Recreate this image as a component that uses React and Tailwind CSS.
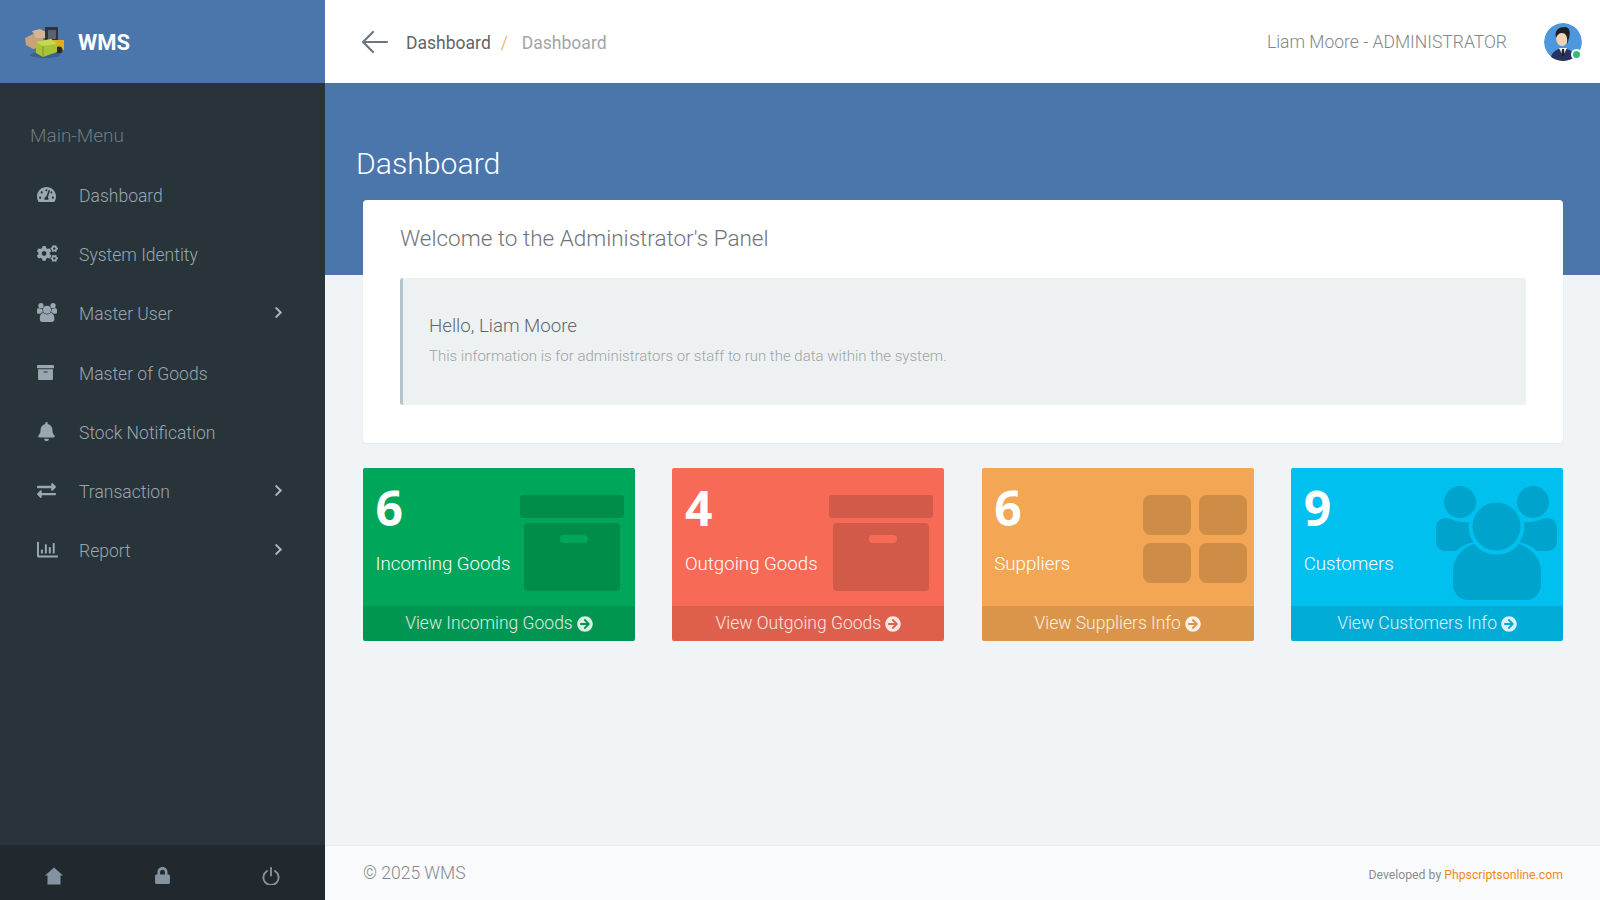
import React from 'react';
import {
  FaTachometerAlt, FaCogs, FaArchive, FaBell, FaExchangeAlt, FaRegChartBar,
  FaChevronRight, FaLock, FaArrowCircleRight,
} from 'react-icons/fa';

const Logo = () => (
  <svg width="42" height="34" viewBox="0 0 42 34">
    <ellipse cx="21" cy="30" rx="15" ry="3" fill="#2a4a6b" opacity="0.5" />
    <path d="M1 13 L9 9 L19 12 L19 22 L9 24 L2 20 Z" fill="#c8a27c" />
    <path d="M8 6 L16 4 L22 7 L22 13 L12 13 Z" fill="#d7b593" />
    <rect x="21" y="2" width="13" height="17" fill="#2f3338" />
    <rect x="24" y="5" width="8" height="9" fill="#59636b" />
    <path d="M29 15 L40 15 L40 25 L29 27 Z" fill="#e2ad1f" />
    <circle cx="35" cy="25" r="3.5" fill="#2b2b2b" />
    <path d="M12 17 L27 14 L33 19 L33 27 L19 32 L12 28 Z" fill="#a9c23a" />
    <path d="M12 17 L19 21 L33 19 L27 14 Z" fill="#c6d84f" />
    <path d="M19 21 L19 32" stroke="#7f9524" strokeWidth="1" />
  </svg>
);

const Avatar = () => (
  <svg width="38" height="38" viewBox="0 0 38 38" className="rounded-full">
    <circle cx="19" cy="19" r="19" fill="#4f97dc" />
    <path d="M6 38 C7 29 12 26 19 25 C26 26 31 29 32 38 Z" fill="#27335f" />
    <path d="M15 25 L19 33 L23 25 Z" fill="#f2f2f2" />
    <path d="M18 26 L20 26 L20.5 32 L19 34 L17.5 32 Z" fill="#1b1f33" />
    <ellipse cx="18" cy="15" rx="6" ry="8" fill="#f6d2b5" />
    <path d="M12 15 C10 7 15 4 21 4 C25 4 27 8 25 15 C24 18 24 20 23 21 C24 14 22 10 18 10 C15 10 13 12 12 15 Z" fill="#1d2125" />
  </svg>
);

const ArchiveArt = () => (
  <svg width="104" height="96" viewBox="0 0 104 96" fill="#000" fillOpacity="0.15" className="absolute right-[11px] top-[27px]">
    <rect x="0" y="0" width="104" height="23" rx="3" />
    <path fillRule="evenodd" d="M8 28 H96 a4 4 0 0 1 4 4 V92 a4 4 0 0 1 -4 4 H8 a4 4 0 0 1 -4 -4 V32 a4 4 0 0 1 4 -4 Z M44 40 a4 4 0 0 0 0 8 H64 a4 4 0 0 0 0 -8 Z" />
  </svg>
);

const TilesArt = () => (
  <svg width="105" height="88" viewBox="0 0 105 88" fill="#000" fillOpacity="0.15" className="absolute right-[6px] top-[27px]">
    <rect x="0" y="0" width="48" height="40" rx="8" />
    <rect x="56" y="0" width="48" height="40" rx="8" />
    <rect x="0" y="48" width="48" height="40" rx="8" />
    <rect x="56" y="48" width="48" height="40" rx="8" />
  </svg>
);

const PeopleShape = () => (
  <>
    <circle cx="24" cy="16" r="16" />
    <circle cx="97" cy="16" r="16" />
    <circle cx="60.5" cy="40.5" r="24" />
    <path d="M10 32 C15 32 20 37 33 36 C32 46 34 52 38 56 C30 58 24 61 20 65 H10 C4 65 0 61 0 55 V42 C0 36 4 32 10 32 Z" />
    <path d="M111 32 C106 32 101 37 88 36 C89 46 87 52 83 56 C91 58 97 61 101 65 H111 C117 65 121 61 121 55 V42 C121 36 117 32 111 32 Z" />
    <path d="M38 58 A29 29 0 0 0 83 58 C95 62 105 72 105 86 V98 C105 107 99 114 90 114 H32 C23 114 17 107 17 98 V86 C17 72 26 62 38 58 Z" />
  </>
);

const UsersArt = () => (
  <svg width="121" height="114" viewBox="0 0 121 114" fill="#000" fillOpacity="0.15" className="absolute right-[6px] top-[18px]">
    <PeopleShape />
  </svg>
);

const UsersIcon = () => (
  <svg width="20" height="19" viewBox="0 0 121 114" fill="currentColor"><PeopleShape /></svg>
);

const HomeIcon = () => (
  <svg width="18" height="18" viewBox="0 0 18 18" fill="currentColor">
    <path d="M9 0.5 L18 8.5 L15.5 8.5 L15.5 17.5 L2.5 17.5 L2.5 8.5 L0 8.5 Z" />
  </svg>
);

const PowerIcon = () => (
  <svg width="18" height="18" viewBox="0 0 18 18" fill="none" stroke="currentColor" strokeWidth="1.9" strokeLinecap="round">
    <path d="M5 4 A7.6 7.6 0 1 0 13 4 M9 1 V8.5" />
  </svg>
);

const menu = [
  { icon: <FaTachometerAlt size={19} />, label: 'Dashboard' },
  { icon: <FaCogs size={21} />, label: 'System Identity' },
  { icon: <UsersIcon />, label: 'Master User', sub: true },
  { icon: <FaArchive size={17} />, label: 'Master of Goods' },
  { icon: <FaBell size={19} />, label: 'Stock Notification' },
  { icon: <FaExchangeAlt size={19} />, label: 'Transaction', sub: true },
  { icon: <FaRegChartBar size={21} />, label: 'Report', sub: true },
];

const stats = [
  { n: 6, label: 'Incoming Goods', link: 'View Incoming Goods', bg: 'bg-[#00a65a]', art: <ArchiveArt /> },
  { n: 4, label: 'Outgoing Goods', link: 'View Outgoing Goods', bg: 'bg-[#f76a55]', art: <ArchiveArt /> },
  { n: 6, label: 'Suppliers', link: 'View Suppliers Info', bg: 'bg-[#f3a653]', art: <TilesArt /> },
  { n: 9, label: 'Customers', link: 'View Customers Info', bg: 'bg-[#00c0ef]', art: <UsersArt /> },
];

export default function App() {
  return (
    <div className="flex h-screen w-full overflow-hidden font-['Roboto',sans-serif] font-light text-[#6b7177]">
      <aside className="w-[325px] shrink-0 flex flex-col bg-[#28343a]">
        <div className="h-[83px] shrink-0 bg-[#4a76ac] flex items-center pl-[24px] gap-[12px]">
          <Logo />
          <span className="text-[22px] font-bold text-white mt-[2px]">WMS</span>
        </div>
        <div className="flex-1 pt-[38px]">
          <p className="pl-[30px] text-[19px] leading-[30px] text-[#6c7a84]">Main-Menu</p>
          <ul className="mt-[15.5px]">
            {menu.map(item => (
              <li key={item.label} className="h-[59.2px] flex items-center pl-[37px] pr-[40px] text-[#9aa7b1]">
                <span className="w-[42px] -mt-[3px]">{item.icon}</span>
                <span className="flex-1 text-[17.55px]">{item.label}</span>
                {item.sub && <FaChevronRight size={13} className="-mt-[4px] text-[#aab5bd]" />}
              </li>
            ))}
          </ul>
        </div>
        <div className="h-[55px] shrink-0 bg-[#22292e] grid grid-cols-3 items-center justify-items-center text-[#8493a1]">
          <span className="mt-[6px]"><HomeIcon /></span>
          <FaLock size={17} className="mt-[6px]" />
          <span className="mt-[6px]"><PowerIcon /></span>
        </div>
      </aside>

      <main className="flex-1 min-w-0 flex flex-col bg-[#f0f4f6]">
        <header className="h-[83px] shrink-0 bg-white flex items-center pl-[36px] pr-[18px] text-[17.55px]">
          <svg width="28" height="24" viewBox="0 0 28 24" fill="none" stroke="#6b7680" strokeWidth="2.2" strokeLinecap="round" strokeLinejoin="round" className="mt-[1px]">
            <path d="M26 12 H2 M12 2 L2 12 L12 22" />
          </svg>
          <span className="ml-[17px] mt-[3px] text-[#5f6468] font-normal">Dashboard</span>
          <span className="ml-[10px] mr-[14px] mt-[3px] text-[#eea13f]">/</span>
          <span className="mt-[3px] text-[#a2a6a9] font-normal">Dashboard</span>
          <span className="ml-auto mt-[2px] text-[#80878d]">Liam Moore - ADMINISTRATOR</span>
          <div className="relative ml-[37px]">
            <Avatar />
            <span className="absolute right-0 bottom-[1px] w-[11px] h-[11px] rounded-full bg-[#3cb878] border-2 border-white" />
          </div>
        </header>

        <div className="flex-1 min-h-0">
          <div className="h-[192px] bg-[#4a76ac] pl-[31px] pt-[61px]">
            <h1 className="text-[30.2px] leading-[40px] font-light text-white">Dashboard</h1>
          </div>
          <div className="-mt-[75px] pl-[38px] pr-[37px]">
            <section className="bg-white rounded-[4px] p-[37px] pt-[22px] h-[243px] shadow-[0_1px_2px_rgba(0,0,0,0.05)]">
              <h2 className="text-[22.5px] leading-[32px] text-[#6f7478] font-light">Welcome to the Administrator's Panel</h2>
              <div className="mt-[24px] h-[127px] bg-[#eef1f2] border-l-[3px] border-[#b4c2c9] rounded-[3px] pl-[26px] pt-[34px]">
                <p className="text-[18.7px] leading-[28px] text-[#63676b]">Hello, Liam Moore</p>
                <p className="mt-[5px] text-[15px] leading-[22px] text-[#9ea3a7]">This information is for administrators or staff to run the data within the system.</p>
              </div>
            </section>

            <div className="mt-[25px] grid grid-cols-4 gap-[37.5px]">
              {stats.map(s => (
                <div key={s.link} className={`relative h-[173px] rounded-[2px] overflow-hidden flex flex-col text-white ${s.bg}`}>
                  {s.art}
                  <div className="flex-1 pl-[12.5px]">
                    <div className="mt-[8px] text-[48px] leading-[64px] font-bold font-['Open_Sans',sans-serif]">{s.n}</div>
                    <div className="mt-[10px] text-[18.7px] leading-[28px]">{s.label}</div>
                  </div>
                  <div className="h-[35px] bg-black/10 flex items-center justify-center gap-[4px] text-[17.5px] text-white/85">
                    {s.link} <FaArrowCircleRight size={16} />
                  </div>
                </div>
              ))}
            </div>
          </div>
        </div>

        <footer className="h-[55px] shrink-0 bg-[#f9fafb] border-t border-[#eceff1] flex items-center justify-between pl-[38px] pr-[37px]">
          <span className="text-[17.5px] text-[#85898d] mt-[1px]">© 2025 WMS</span>
          <span className="text-[12.25px] font-normal text-[#8a8e92] mt-[4px]">Developed by <span className="text-[#f08a1d]">Phpscriptsonline.com</span></span>
        </footer>
      </main>
    </div>
  );
}
